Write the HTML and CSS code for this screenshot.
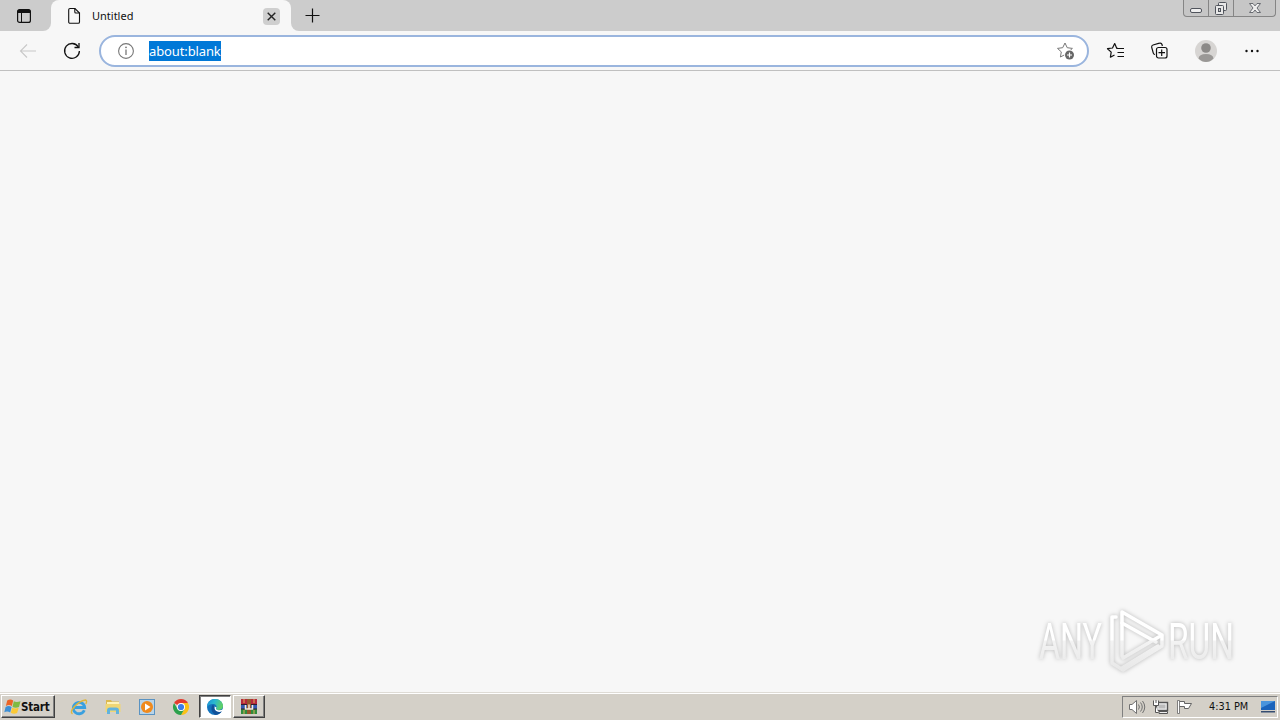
FILE: index.html
```html
<!DOCTYPE html>
<html lang="en">
<head>
    <meta charset="UTF-8">
    <meta name="viewport" content="width=device-width, initial-scale=1.0">
    <title>Untitled</title>
    <link rel="stylesheet" href="styles.css">
</head>
<body>
    <div class="tab-strip">
        <div class="strip-left">
            <svg width="16" height="16" viewBox="0 0 16 16">
                <rect x="1.6" y="1.6" width="12.8" height="12.8" rx="2" fill="none" stroke="#111" stroke-width="1.2"/>
                <path d="M1.5 5V3.5a2 2 0 0 1 2-2h9a2 2 0 0 1 2 2V5z" fill="#111"/>
                <path d="M5.5 5v9" stroke="#111"/>
            </svg>
        </div>
        <div class="tab-holder">
            <div class="tab">
                <svg width="14" height="18" viewBox="0 0 14 18" fill="none" stroke="#111" stroke-width="1.1">
                    <path d="M3 1.5h5l4.5 4.500v9a1.300 1.300 0 0 1-1.300 1.300H3a1.300 1.300 0 0 1-1.300-1.300V2.800A1.300 1.300 0 0 1 3 1.500z"/>
                    <path d="M7.800 1.500v3.500a1 1 0 0 0 1 1h3.700"/>
                </svg>
                <span class="tab-title">Untitled</span>
                <span class="tab-close">
                    <svg width="9" height="9" viewBox="0 0 9 9"><path d="M.7.7l7.600 7.600M8.300.7L.7 8.300" stroke="#222" stroke-width="1.400"/></svg>
                </span>
            </div>
        </div>
        <div class="strip-right">
            <svg class="new-tab" width="16" height="16" viewBox="0 0 16 16"><path d="M8.500 1.500v14M1.500 8.500h14" stroke="#111" stroke-width="1.200"/></svg>
            <div class="window-buttons">
                <span class="win-min">
                    <svg width="14" height="16" viewBox="0 0 14 16"><rect x="1.500" y="8.500" width="11" height="4" rx="1.500" fill="#eee" stroke="#50545c"/></svg>
                </span>
                <span class="win-max">
                    <svg width="14" height="16" viewBox="0 0 14 16" fill="#e8e8e8" stroke="#50545c">
                        <rect x="4.500" y="2.500" width="8" height="8" rx="1"/>
                        <rect x="1.500" y="5.500" width="8" height="9" rx="1"/>
                        <rect x="4.500" y="8.500" width="2" height="3" fill="#ccc"/>
                    </svg>
                </span>
                <span class="win-close">
                    <svg width="14" height="16" viewBox="0 0 14 16"><path d="M1.500 3.500h3.500l2 2.400 2-2.400h3.500L9 8l3.500 4.500H9L7 10l-2 2.500H1.500L5 8z" fill="#eee" stroke="#5c6066" stroke-width=".9"/></svg>
                </span>
            </div>
        </div>
    </div>

    <div class="toolbar">
        <svg class="back" width="18" height="16" viewBox="0 0 18 16" fill="none" stroke="#c8c8c8" stroke-width="1.100"><path d="M17 8H1.500M8 1.500L1.500 8 8 14.500"/></svg>
        <svg class="reload" width="18" height="18" viewBox="0 0 18 18" fill="none" stroke="#111" stroke-width="1.300"><path d="M15.300 5A7.400 7.400 0 1 0 16.400 9"/><path d="M16 1v4.500h-4.500"/></svg>
        <div class="address">
            <svg width="18" height="18" viewBox="0 0 18 18"><circle cx="9" cy="9" r="7.400" fill="none" stroke="#777" stroke-width="1.100"/><path d="M9 7.500v5.500" stroke="#777" stroke-width="1.300"/><circle cx="9" cy="5.300" r=".9" fill="#777"/></svg>
            <span class="url">about:blank</span>
            <svg class="add-fav" width="20" height="20" viewBox="0 0 20 20">
                <path d="M9 2l2.200 4.700 5.200.7-3.800 3.500.9 5.100L9 13.600 4.400 16l.9-5.100L1.500 7.400l5.200-.7z" fill="none" stroke="#777" stroke-linejoin="round"/>
                <circle cx="13.500" cy="14" r="5.400" fill="#fff"/>
                <circle cx="13.500" cy="14" r="4.500" fill="#666"/>
                <path d="M13.500 11.500v5M11 14h5" stroke="#fff" stroke-width="1.200"/>
            </svg>
        </div>
        <svg class="favorites" width="20" height="20" viewBox="0 0 20 20" fill="none" stroke="#111" stroke-width="1.200" stroke-linejoin="round">
            <path d="M12 7.300h-1.300L8.700 2.500 6.500 7l-5 .7 3.700 3.400-.8 5.100 4.100-2.300"/>
            <path d="M11 7.500h7M11.500 11.500H18M11.500 15.500H18"/>
        </svg>
        <svg class="collections" width="20" height="20" viewBox="0 0 20 20" fill="none" stroke="#111" stroke-width="1.200">
            <path d="M5 13.500a2 2 0 0 1-1.700-1.400L1.700 6.400A2 2 0 0 1 3 4l6.500-1.800A2 2 0 0 1 12 3.500l.4 1.500"/>
            <rect x="6.500" y="6.500" width="10.500" height="10.500" rx="2"/>
            <path d="M11.700 8.500v6.500M8.500 11.700H15"/>
        </svg>
        <svg class="profile" width="22" height="22" viewBox="0 0 22 22">
            <circle cx="11" cy="11" r="11" fill="#d7d5d3"/>
            <circle cx="11" cy="8" r="4.800" fill="#8c8a88"/>
            <path d="M3.500 18.500q.5-4.500 7.500-4.500t7.500 4.500Q15 22 11 22t-7.500-3.500z" fill="#9a9896"/>
        </svg>
        <svg class="more" width="16" height="4" viewBox="0 0 16 4" fill="#111"><circle cx="2.500" cy="2" r="1.200"/><circle cx="8" cy="2" r="1.200"/><circle cx="13.500" cy="2" r="1.200"/></svg>
    </div>

    <div class="page">
        <svg class="watermark" width="220" height="80" viewBox="0 0 220 80">
            <defs>
                <linearGradient id="fade" gradientUnits="userSpaceOnUse" x1="0" y1="20" x2="0" y2="70">
                    <stop offset="0" stop-color="#fff"/>
                    <stop offset=".4" stop-color="#fff"/>
                    <stop offset=".42" stop-color="#f3f3f3"/>
                    <stop offset="1" stop-color="#e8e8e8"/>
                </linearGradient>
            </defs>
            <g class="wm-text" fill="url(#fade)">
                <text x="14" y="59" textLength="63" lengthAdjust="spacingAndGlyphs">ANY</text>
                <text x="143" y="59" textLength="66" lengthAdjust="spacingAndGlyphs">RUN</text>
            </g>
            <g fill="none" stroke="url(#fade)" stroke-width="3.500" stroke-linejoin="round" stroke-linecap="round">
                <path d="M97 56V12l40 23-39 23"/>
                <path d="M97 23l34 19"/>
                <path d="M91 17h-4v46l11 7 39-24V36"/>
                <path d="M97 68l36-22"/>
            </g>
        </svg>
    </div>

    <div class="taskbar">
        <div class="start">
            <svg width="17" height="16" viewBox="0 0 17 16">
                <path d="M3.200 1.500q3-2 6 0L7.900 7q-2.900-1.800-6 0z" fill="#ec6425"/>
                <path d="M9.800 2.200q2.700 1.600 6.700 0L15 7.900q-3.300 1.500-6.500 0z" fill="#7fba42"/>
                <path d="M1.600 7.900q3-1.800 6 0L6.200 13.500q-2.900-1.700-5.900-.2z" fill="#3d8fd5"/>
                <path d="M8.200 8.700q3 1.500 6.500 0l-1.600 5.300q-3.200 1.600-6.300-.2z" fill="#fbc935"/>
            </svg>
            <span>Start</span>
        </div>
        <div class="quick">
            <span class="task">
                <svg width="18" height="18" viewBox="0 0 18 18">
                    <path d="M14.300 12.200A5.700 5.700 0 1 1 14.700 9.500H5" fill="none" stroke="#3aa0df" stroke-width="2.800"/>
                    <path d="M2.500 15.800Q-.5 14 4.500 8.500T15.500 2q2 .7.300 4" fill="none" stroke="#dfb63c" stroke-width="1.400"/>
                </svg>
            </span>
            <span class="task">
                <svg width="18" height="18" viewBox="0 0 18 18">
                    <path d="M2 2h5l1 1.500h7V14H2z" fill="#dcb94f"/>
                    <path d="M3 4h12v3H3z" fill="#fff3b8"/>
                    <path d="M1.500 6h15v8h-15z" fill="#f0d674"/>
                    <path d="M3 16v-3.500Q3 9.500 6 9.500h6q3 0 3 3V16h-3v-3.500H6V16z" fill="#62b3dd"/>
                </svg>
            </span>
            <span class="task">
                <svg width="18" height="18" viewBox="0 0 18 18">
                    <rect x="1.500" y="1.500" width="15" height="15" fill="#b9d4e8" stroke="#5a93c2"/>
                    <circle cx="9" cy="9" r="6" fill="#f08a1d"/>
                    <path d="M7 5.500v7L12.500 9z" fill="#fff"/>
                </svg>
            </span>
            <span class="task">
                <svg width="18" height="18" viewBox="0 0 18 18">
                    <path d="M9 9L2.070 5A8 8 0 0 1 15.930 5z" fill="#e33b2e"/>
                    <path d="M9 9V5h6.930A8 8 0 0 1 9 17l3.460-6z" fill="#fbc116"/>
                    <path d="M9 9l3.460 2L9 17A8 8 0 0 1 2.070 5l3.470 6z" fill="#2da14c"/>
                    <circle cx="9" cy="9" r="4" fill="#fff"/>
                    <circle cx="9" cy="9" r="3.100" fill="#3b7de9"/>
                </svg>
            </span>
            <span class="task active">
                <svg width="18" height="18" viewBox="0 0 18 18">
                    <defs>
                        <linearGradient id="wave" x1="0" y1="0" x2="1" y2=".3"><stop offset="0" stop-color="#1b8fd6"/><stop offset=".5" stop-color="#29b8d1"/><stop offset="1" stop-color="#5fd068"/></linearGradient>
                    </defs>
                    <circle cx="9" cy="9" r="8" fill="#1473bd"/>
                    <path d="M1 9.500C1 4 4.500 1 9 1c5 0 8 3.500 8 7 0 2.500-2 4-4.500 4-2 0-3-.8-2.300-1.800C11.500 8 9.500 6 7 6 4 6 1.500 7.500 1 9.500z" fill="url(#wave)"/>
                    <path d="M8.500 8.500C7.500 11 9.500 14.200 13 14.200q2 0 3.800-1.500L17.500 11Q14 13 11.500 12T10.500 9.500z" fill="#fff"/>
                    <path d="M7 6.500c-3 3-1.500 9 2.800 10.400 2.500-.1 4.700-1.500 6-3.300-4.500 1.400-8-1-7.300-4.500z" fill="#105199"/>
                </svg>
            </span>
            <span class="task raised">
                <svg width="18" height="18" viewBox="0 0 18 18">
                    <path d="M1 1h16v5.500H1z" fill="#b5283c"/>
                    <path d="M1 6.500h16V11H1z" fill="#345ab0"/>
                    <path d="M1 11h16v5H1z" fill="#2f8c3d"/>
                    <path d="M1 6.500h16M1 11h16" stroke="#331f28"/>
                    <path d="M7 1h4v15H7z" fill="#94572b"/>
                    <path d="M4 1v4M14 1v4M4 12v4M14 12v4" stroke="#dcae56"/>
                    <path d="M5.500 7v4h7V7M9 6.500V11" fill="none" stroke="#f4eddc" stroke-width="1.500"/>
                </svg>
            </span>
        </div>
        <div class="tray">
            <svg width="18" height="16" viewBox="0 0 18 16" fill="none" stroke="#707070">
                <path d="M1.500 5.500H4L8.500 1.500v13L4 10.500H1.500z" fill="#fff"/>
                <path d="M10.500 5.500q1.800 2.500 0 5M12.500 3.500q3.500 4.500 0 9M14.500 2q4.500 6 0 12"/>
            </svg>
            <svg class="network" width="18" height="16" viewBox="0 0 18 16" fill="#eee" stroke="#555">
                <rect x="4.500" y="3.500" width="11" height="8" stroke-width="1.400"/>
                <rect x="6.500" y="5.500" width="7" height="4" fill="#bbb" stroke="none"/>
                <path d="M7 14.500h8.500v-2H7z"/>
                <path d="M1.500 1.500v5h5v-5M4 1v3M3.500 6.500v7h3" fill="#fff"/>
            </svg>
            <svg class="flag" width="18" height="16" viewBox="0 0 18 16" fill="#fff" stroke="#656565">
                <path d="M2.500 2.500h6v2h7l-3 5H8.500v-2h-6"/>
                <path d="M1.500 1.500h2v13h-2z" stroke-width=".8"/>
            </svg>
            <span class="clock">4:31 PM</span>
            <svg class="desktop" width="16" height="14" viewBox="0 0 16 14">
                <path d="M1 1h14v9H1z" fill="#1b63bb"/>
                <path d="M1 1h14L1 8z" fill="#4a94dc"/>
                <path d="M1 11h14v1.500H1z" fill="#344c70"/>
            </svg>
        </div>
    </div>
</body>
</html>
```
FILE: styles.css
```css
* {
    box-sizing: border-box;
}
body {
    margin: 0;
    width: 1280px;
    height: 720px;
    display: flex;
    flex-direction: column;
    overflow: hidden;
    background-color: #f7f7f7;
    font-family: "DejaVu Sans", sans-serif;
    color: #111;
}
svg {
    display: block;
    flex-shrink: 0;
}
.tab-strip {
    display: flex;
    height: 31px;
    flex-shrink: 0;
}
.strip-left {
    width: 51px;
    padding: 8px 0 0 16px;
    background-color: #ccc;
    border-bottom-right-radius: 8px;
}
.tab-holder {
    width: 240px;
    background: linear-gradient(#ccc 50%, #f7f7f7 50%);
}
.tab {
    display: flex;
    align-items: center;
    height: 31px;
    padding: 1px 11px 0 16px;
    background-color: #f7f7f7;
    border-radius: 8px 8px 0 0;
}
.tab-title {
    margin-left: 11px;
    padding-bottom: 2px;
    flex: 1;
    font-family: "Noto Sans", sans-serif;
    font-size: 11px;
}
.tab-close {
    display: flex;
    align-items: center;
    justify-content: center;
    width: 17px;
    height: 17px;
    border-radius: 4px;
    background-color: #cfcfcf;
}
.strip-right {
    display: flex;
    flex: 1;
    justify-content: space-between;
    align-items: flex-start;
    padding: 0 4px 0 13px;
    background-color: #ccc;
    border-bottom-left-radius: 8px;
}
.new-tab {
    margin-top: 7px;
}
.window-buttons {
    display: flex;
    height: 17px;
    border: 1px solid #858585;
    border-top: none;
    border-radius: 0 0 4px 4px;
    background-color: #c6c6c6;
}
.window-buttons span {
    display: flex;
    justify-content: center;
    border-left: 1px solid #858585;
}
.window-buttons .win-min {
    width: 24px;
    border-left: none;
}
.window-buttons .win-max {
    width: 25px;
}
.window-buttons .win-close {
    width: 42px;
}
.toolbar {
    display: flex;
    align-items: center;
    height: 40px;
    flex-shrink: 0;
    padding: 0 0 0 19px;
    border-bottom: 1px solid #c0c0c0;
}
.reload {
    margin-left: 26px;
}
.address {
    display: flex;
    align-items: center;
    width: 990px;
    height: 32px;
    margin-left: 18px;
    padding: 0 11px 0 16px;
    background-color: #fff;
    border: 2px solid #9ab5de;
    border-radius: 16px;
}
.url {
    width: 72px;
    margin-left: 14px;
    height: 20px;
    line-height: 20px;
    font-family: "Noto Sans", sans-serif;
    font-size: 13px;
    letter-spacing: -0.12px;
    white-space: nowrap;
    color: #fff;
    background-color: #0078d7;
}
.add-fav {
    margin-left: auto;
}
.favorites {
    margin-left: 17px;
}
.collections {
    margin-left: 24px;
}
.profile {
    margin-left: 25px;
}
.more {
    margin-left: 27px;
}
.page {
    flex: 1;
    display: flex;
    align-items: flex-end;
    justify-content: flex-end;
    padding: 0 35px 12px 0;
}
.watermark {
    filter: drop-shadow(0 0 2px rgba(0, 0, 0, 0.25));
}
.wm-text {
    font-family: Roboto, sans-serif;
    font-size: 50px;
}
.taskbar {
    display: flex;
    align-items: center;
    height: 28px;
    flex-shrink: 0;
    padding: 1px 2px 1px 1px;
    background-color: #d4d0c8;
    border-top: 1px solid #dedbd5;
    box-shadow: inset 0 1px #fff;
}
.start {
    display: flex;
    align-items: center;
    width: 54px;
    height: 23px;
    padding-left: 2px;
    border: 1px solid;
    border-color: #fff #404040 #404040 #fff;
    box-shadow: inset -1px -1px #808080;
    font-family: "DejaVu Sans Condensed", "DejaVu Sans", sans-serif;
    font-size: 11.5px;
    font-weight: bold;
    letter-spacing: -0.2px;
}
.quick {
    display: flex;
    gap: 2px;
    margin-left: 8px;
}
.task {
    display: flex;
    align-items: center;
    justify-content: center;
    width: 32px;
    height: 23px;
}
.active {
    background-color: #fff;
    border: 1px solid;
    border-color: #404040 #fff #fff #404040;
    box-shadow: inset 1px 1px #808080;
}
.raised {
    border: 1px solid;
    border-color: #fff #404040 #404040 #fff;
    box-shadow: inset -1px -1px #808080;
}
.tray {
    display: flex;
    align-items: center;
    width: 156px;
    height: 22px;
    margin-left: auto;
    padding-left: 5px;
    border: 1px solid;
    border-color: #808080 #fff #fff #808080;
}
.network {
    margin-left: 6px;
}
.flag {
    margin-left: 6px;
}
.clock {
    width: 40px;
    margin-left: 15px;
    font-family: "DejaVu Sans Condensed", "DejaVu Sans", sans-serif;
    font-size: 10.8px;
    white-space: nowrap;
}
.desktop {
    margin-left: 11px;
}
```
